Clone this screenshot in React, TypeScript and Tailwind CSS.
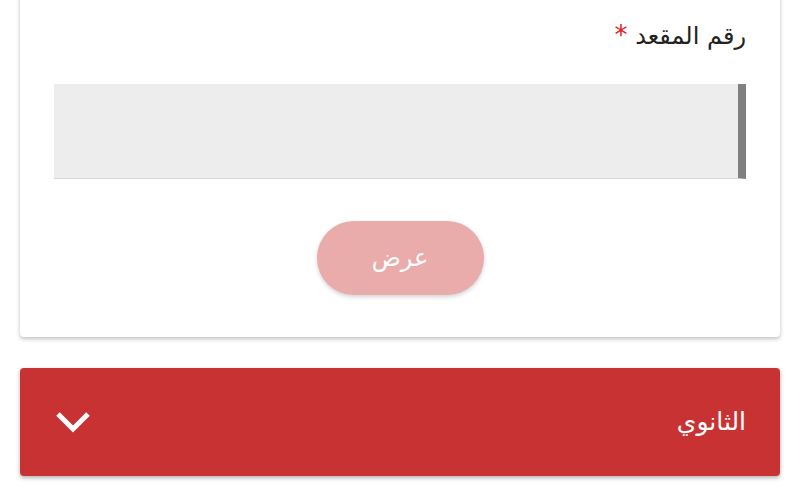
import React from 'react';

export default function App() {
  return (
    <div dir="rtl" className="w-[800px] h-[500px] overflow-hidden bg-white" style={{ fontFamily: '"DejaVu Sans", "Noto Sans", sans-serif' }}>
      <div className="mx-5 -mt-[19px] bg-white rounded shadow-[0_2px_4px_rgba(0,0,0,0.25)] px-[34px] pt-[36px] pb-[42px]">
        <label className="block text-[24px] leading-[36px] text-[#222]">
          رقم المقعد <span className="text-[#e02020] text-[26px]">*</span>
        </label>
        <div className="mt-[30px] h-[95px] bg-[#ededed] border-r-[8px] border-r-[#808080] border-b border-b-[#d6d6d6]"></div>
        <div className="flex justify-center mt-[42px]">
          <button className="w-[167px] h-[74px] rounded-full bg-[#eaabab] text-white text-[24px] shadow-[0_2px_4px_rgba(0,0,0,0.18)]">
            عرض
          </button>
        </div>
      </div>
      <div className="mx-5 mt-[31px] h-[108px] bg-[#c93232] rounded shadow-[0_2px_4px_rgba(0,0,0,0.3)] flex items-center justify-between pr-[34px] pl-[35px]">
        <span className="text-white text-[25px]">الثانوي</span>
        <svg width="36" height="22" viewBox="0 0 36 22" fill="none">
          <path d="M3 3 L18 18 L33 3" stroke="white" strokeWidth="5" strokeLinejoin="miter" />
        </svg>
      </div>
    </div>
  );
}
